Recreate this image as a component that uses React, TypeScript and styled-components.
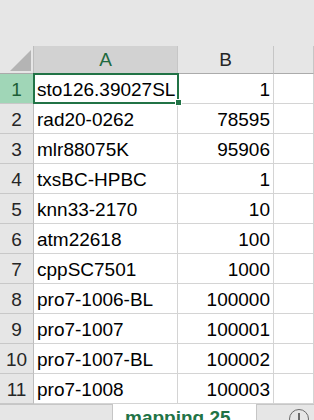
import React from "react";
import styled, { createGlobalStyle, css } from "styled-components";

const Global = createGlobalStyle`
  html, body { margin: 0; padding: 0; background: #fff; }
  body { width: 314px; height: 420px; overflow: hidden; font-family: "Liberation Sans", Arial, sans-serif; }
  * { box-sizing: border-box; }
`;

const Page = styled.div`
  width: 314px;
  height: 420px;
  display: flex;
  flex-direction: column;
  overflow: hidden;
  background: #fff;
`;

const TopArea = styled.div`
  height: 46px;
  flex: none;
  background: #e6e6e6;
`;

const Sheet = styled.div`
  display: grid;
  grid-template-columns: 34px 144px 96px 1fr;
  grid-template-rows: 28px repeat(11, 30px);
  flex: none;
`;

const CornerCell = styled.div`
  background: #e6e6e6;
  border-right: 1px solid #bdbdbd;
  border-bottom: 1px solid #ababab;
  display: flex;
  align-items: flex-end;
  justify-content: flex-end;
  padding: 0 2px 2px 0;
`;

const ColHeader = styled.div<{ $sel?: boolean }>`
  background: ${(p) => (p.$sel ? "#d2d2d2" : "#e6e6e6")};
  color: ${(p) => (p.$sel ? "#1f6a40" : "#262626")};
  border-right: 1px solid #c6c6c6;
  border-bottom: 1px solid ${(p) => (p.$sel ? "#217346" : "#ababab")};
  display: flex;
  align-items: center;
  justify-content: center;
  font-size: 19px;
  padding-top: 1px;
`;

const RowHeader = styled.div<{ $sel?: boolean }>`
  background: ${(p) => (p.$sel ? "#a0d6b7" : "#e6e6e6")};
  color: ${(p) => (p.$sel ? "#1b5e36" : "#262626")};
  border-right: 1px solid ${(p) => (p.$sel ? "#217346" : "#bdbdbd")};
  border-bottom: 1px solid #c8c8c8;
  display: flex;
  align-items: center;
  justify-content: center;
  font-size: 19px;
  padding-top: 2px;
`;

const Cell = styled.div<{ $num?: boolean; $sel?: boolean }>`
  position: relative;
  border-right: 1px solid #d4d4d4;
  border-bottom: 1px solid #d4d4d4;
  display: flex;
  align-items: center;
  font-size: 19px;
  color: #000;
  padding: 2px 3px 0 3px;
  white-space: nowrap;
  ${(p) =>
    p.$num &&
    css`
      justify-content: flex-end;
      padding-right: 3px;
    `}
  ${(p) =>
    p.$sel &&
    css`
      z-index: 2;
    `}
`;

const SelBox = styled.div`
  position: absolute;
  left: -1px;
  top: -1px;
  right: -2px;
  bottom: -1px;
  border: 2px solid #217346;
  pointer-events: none;
`;

const Handle = styled.div`
  position: absolute;
  right: -5px;
  bottom: -4px;
  width: 7px;
  height: 7px;
  background: #217346;
  border: 1px solid #fff;
`;

const TabBar = styled.div`
  flex: 1;
  display: grid;
  grid-template-columns: 113px 143px 1fr;
  overflow: hidden;
`;

const NavArea = styled.div`
  background: #e6e6e6;
  border-top: 1px solid #c6c6c6;
  border-right: 1px solid #c6c6c6;
  display: flex;
  align-items: flex-end;
  padding-left: 23px;
  gap: 25px;
`;

const Arrow = styled.div<{ $dir: "l" | "r" }>`
  width: 0;
  height: 0;
  margin-bottom: -4px;
  border-top: 6px solid transparent;
  border-bottom: 6px solid transparent;
  ${(p) =>
    p.$dir === "l"
      ? css`border-right: 6px solid #c4c4c4;`
      : css`border-left: 6px solid #c4c4c4;`}
`;

const Tab = styled.div`
  background: #fff;
  color: #217346;
  font-weight: bold;
  font-size: 19px;
  padding: 3px 0 0 12px;
  line-height: 22px;
  white-space: nowrap;
  overflow: hidden;
`;

const AddArea = styled.div`
  background: #e6e6e6;
  border-top: 1px solid #c6c6c6;
  border-left: 1px solid #c6c6c6;
  display: flex;
  justify-content: flex-end;
  padding: 4px 5px 0 0;
`;

const AddCircle = styled.div`
  width: 20px;
  height: 20px;
  border-radius: 50%;
  border: 1.5px solid #6a6a6a;
  flex: none;
  position: relative;
  &::before {
    content: "";
    position: absolute;
    left: 8px;
    top: 3px;
    width: 1.5px;
    height: 12px;
    background: #6a6a6a;
  }
`;

const rows: [string, string][] = [
  ["sto126.39027SL", "1"],
  ["rad20-0262", "78595"],
  ["mlr88075K", "95906"],
  ["txsBC-HPBC", "1"],
  ["knn33-2170", "10"],
  ["atm22618", "100"],
  ["cppSC7501", "1000"],
  ["pro7-1006-BL", "100000"],
  ["pro7-1007", "100001"],
  ["pro7-1007-BL", "100002"],
  ["pro7-1008", "100003"],
];

export default function App() {
  return (
    <Page>
      <Global />
      <TopArea />
      <Sheet>
        <CornerCell>
          <svg width="21" height="21" viewBox="0 0 21 21">
            <polygon points="21,0 21,21 0,21" fill="#b4b4b4" />
          </svg>
        </CornerCell>
        <ColHeader $sel>A</ColHeader>
        <ColHeader>B</ColHeader>
        <ColHeader />
        {rows.map(([a, b], i) => (
          <React.Fragment key={i}>
            <RowHeader $sel={i === 0}>{i + 1}</RowHeader>
            <Cell $sel={i === 0}>
              {a}
              {i === 0 && (
                <SelBox>
                  <Handle />
                </SelBox>
              )}
            </Cell>
            <Cell $num>{b}</Cell>
            <Cell />
          </React.Fragment>
        ))}
      </Sheet>
      <TabBar>
        <NavArea>
          <Arrow $dir="l" />
          <Arrow $dir="r" />
        </NavArea>
        <Tab>mapping 25</Tab>
        <AddArea>
          <AddCircle />
        </AddArea>
      </TabBar>
    </Page>
  );
}
